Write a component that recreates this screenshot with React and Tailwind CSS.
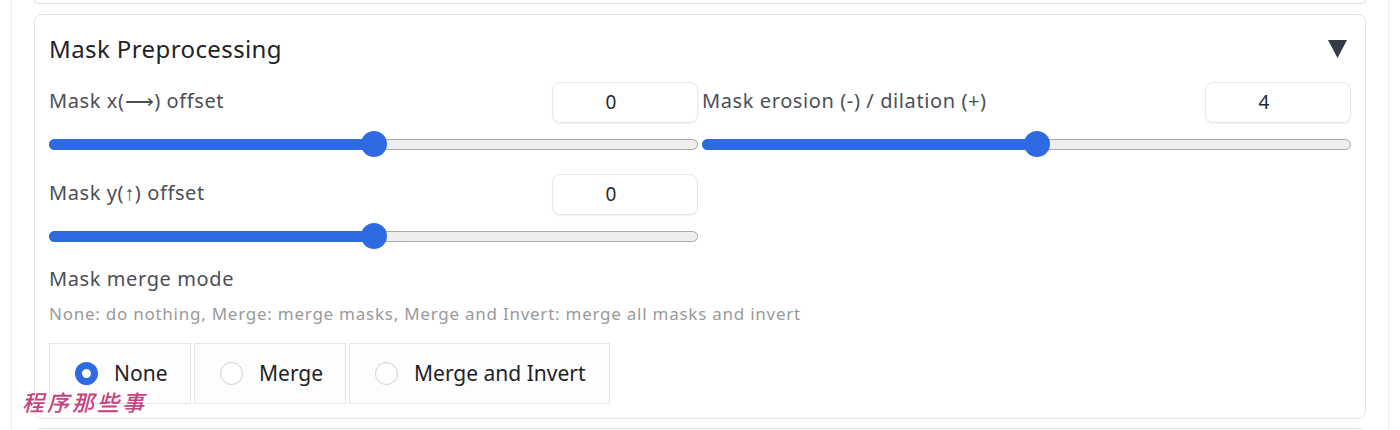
import React from 'react';

const font = { fontFamily: '"Noto Sans", "Open Sans", sans-serif' };

function NumberBox({ value }) {
  return (
    <div className="flex h-[41px] w-[146px] shrink-0 items-center justify-center rounded-lg border border-[#e8e8e8] bg-white pr-[28px] text-[19px] text-[#1f2937] shadow-[0_1px_2px_rgba(0,0,0,0.06)]">
      {value}
    </div>
  );
}

function Slider({ value, min, max }) {
  const pct = ((value - min) / (max - min)) * 100;
  return (
    <div className="relative mt-[8px] flex h-[26px] items-center">
      <div className="h-[11px] w-full rounded-full border border-[#a8a8a8] bg-[#eeeeee]" />
      <div
        className="absolute left-0 h-[11px] rounded-l-full bg-[#2e6be3]"
        style={{ width: pct + '%' }}
      />
      <div
        className="absolute h-[26px] w-[26px] -translate-x-1/2 rounded-full bg-[#2e6be3]"
        style={{ left: pct + '%' }}
      />
    </div>
  );
}

function SliderBlock({ label, value, min, max, className = '' }) {
  return (
    <div className={className}>
      <div className="flex h-[41px] items-center justify-between">
        <span className="-mt-[4px] text-[20px] tracking-[0.6px] text-[#4b4f56]">{label}</span>
        <NumberBox value={value} />
      </div>
      <Slider value={value} min={min} max={max} />
    </div>
  );
}

function Radio({ label, checked, width }) {
  return (
    <label className={`flex h-[61px] items-center gap-[16px] border border-[#e6e6e6] bg-[#fdfdfd] pl-[25px] text-[21px] text-[#1f2328] ${width}`}>
      {checked ? (
        <span className="h-[23px] w-[23px] shrink-0 rounded-full border-[7px] border-[#2e6be3] bg-white" />
      ) : (
        <span className="h-[23px] w-[23px] shrink-0 rounded-full border-[1.5px] border-[#cfcfcf] bg-white" />
      )}
      {label}
    </label>
  );
}

export default function App() {
  return (
    <div className="relative h-[430px] overflow-hidden bg-white" style={font}>
      <div className="mx-[11px] h-full border-x border-[#ececec] px-[22px]">
        <div className="h-[4px] rounded-b-lg border-x border-b border-[#e3e3e3]" />

        <div className="mt-[10px] h-[405px] rounded-lg border border-[#e3e3e3] pl-[14px] pr-[14px] pt-[16px]">
          <div className="flex h-[36px] items-center justify-between">
            <h2 className="text-[24px] tracking-[0.4px] text-[#1f2328]">Mask Preprocessing</h2>
            <svg width="19" height="18" viewBox="0 0 19 18" className="mr-[4px]">
              <polygon points="0,0 19,0 9.5,18" fill="#343a46" />
            </svg>
          </div>

          <div className="mt-[15px] grid grid-cols-2 gap-[4px]">
            <div>
              <SliderBlock label="Mask x(⟶) offset" value={0} min={-200} max={200} />
              <SliderBlock className="mt-[17px]" label="Mask y(↑) offset" value={0} min={-200} max={200} />
            </div>
            <div>
              <SliderBlock label="Mask erosion (-) / dilation (+)" value={4} min={-128} max={128} />
            </div>
          </div>

          <div className="mt-[16px] text-[20px] leading-[28px] tracking-[0.6px] text-[#4b4f56]">Mask merge mode</div>
          <div className="mt-[8px] text-[17px] leading-[26px] tracking-[0.75px] text-[#9a9a9a]">
            None: do nothing, Merge: merge masks, Merge and Invert: merge all masks and invert
          </div>

          <div className="mt-[16px] flex gap-[3px]">
            <Radio label="None" checked width="w-[142px]" />
            <Radio label="Merge" width="w-[152px]" />
            <Radio label="Merge and Invert" width="w-[261px]" />
          </div>
        </div>

        <div className="mt-[9px] h-[10px] rounded-t-lg border-x border-t border-[#e3e3e3]" />
      </div>

      <div
        className="absolute left-[22px] top-[385px] text-[22px] font-medium italic tracking-[3px] text-[#c8417f]"
        style={{ fontFamily: '"Noto Sans CJK SC", sans-serif' }}
      >
        程序那些事
      </div>
    </div>
  );
}
